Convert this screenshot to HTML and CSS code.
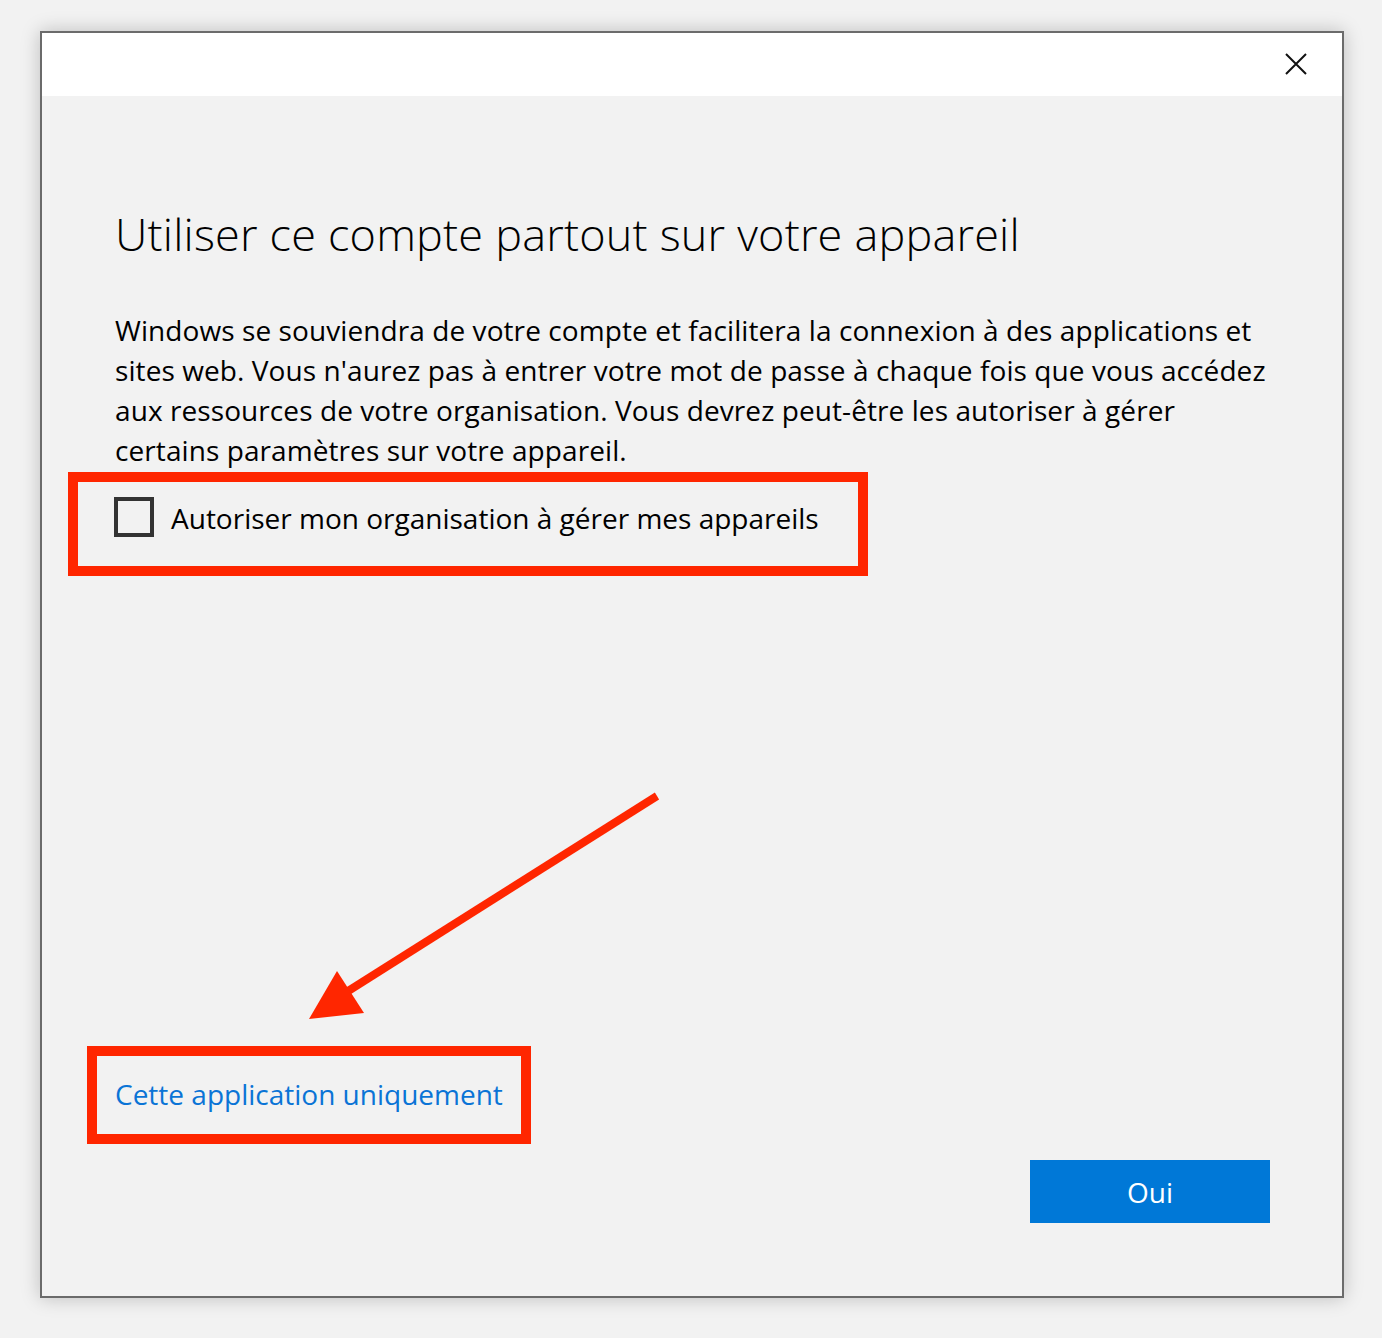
FILE: index.html
```html
<!DOCTYPE html>
<html lang="fr">
<head>
<meta charset="utf-8">
<title>Utiliser ce compte partout sur votre appareil</title>
<link rel="stylesheet" href="styles.css">
</head>
<body>
<div class="window">
  <div class="titlebar">
    <button class="close" aria-label="Fermer">
      <svg width="22" height="22" viewBox="0 0 22 22"><path d="M1 1 L21 21 M21 1 L1 21" stroke="#111" stroke-width="2" fill="none"/></svg>
    </button>
  </div>
  <div class="content">
    <h1 class="title">Utiliser ce compte partout sur votre appareil</h1>
    <p class="text">Windows se souviendra de votre compte et facilitera la connexion à des applications et<br>sites web. Vous n'aurez pas à entrer votre mot de passe à chaque fois que vous accédez<br>aux ressources de votre organisation. Vous devrez peut-être les autoriser à gérer<br>certains paramètres sur votre appareil.</p>
    <label class="check-row">
      <span class="checkbox"></span>
      <span class="check-label">Autoriser mon organisation à gérer mes appareils</span>
    </label>
    <div class="spacer"></div>
    <div class="footer">
      <div class="link-box"><a class="link" href="#">Cette application uniquement</a></div>
      <div class="actions"><button class="primary">Oui</button></div>
    </div>
  </div>
</div>
<svg class="arrow" width="1382" height="1338" viewBox="0 0 1382 1338">
  <line x1="657" y1="796" x2="345" y2="993" stroke="#ff2600" stroke-width="8"/>
  <polygon points="309,1019 337,971 364,1013" fill="#ff2600"/>
</svg>
</body>
</html>
```
FILE: styles.css
```css
html, body {
  margin: 0;
  padding: 0;
}
body {
  background: #f2f2f2;
  width: 1382px;
  height: 1338px;
  position: relative;
  overflow: hidden;
  font-family: "Open Sans", "Noto Sans", sans-serif;
  color: #000;
}
.window {
  position: absolute;
  left: 40px;
  top: 31px;
  width: 1304px;
  height: 1267px;
  box-sizing: border-box;
  border: 2px solid #6b6b6b;
  background: #f2f2f2;
  box-shadow: 0 0 18px rgba(0, 0, 0, 0.22);
  display: flex;
  flex-direction: column;
}
.titlebar {
  height: 63px;
  background: #fff;
  display: flex;
  justify-content: flex-end;
  align-items: center;
  padding-right: 35px;
}
.close {
  border: 0;
  background: transparent;
  padding: 0;
  width: 22px;
  height: 22px;
  display: flex;
  margin-top: -2px;
}
.content {
  flex: 1;
  display: flex;
  flex-direction: column;
  padding: 0 72px 73px 73px;
}
.title {
  margin: 108px 0 0 0;
  font-weight: 300;
  font-size: 45px;
  line-height: 60px;
  letter-spacing: 0.2px;
}
.text {
  margin: 46px 0 0 0;
  font-size: 28px;
  line-height: 40px;
  letter-spacing: 0.08px;
}
.check-row {
  display: flex;
  align-items: center;
  width: 800px;
  height: 104px;
  box-sizing: border-box;
  border: 10px solid #ff2600;
  margin: 2px 0 0 -47px;
  padding: 0 0 13px 36px;
}
.checkbox {
  width: 40px;
  height: 40px;
  box-sizing: border-box;
  border: 4px solid #333;
  margin-right: 17px;
  margin-top: -2px;
}
.check-label {
  font-size: 28px;
  letter-spacing: 0px;
}
.spacer {
  flex: 1;
}
.footer {
  display: flex;
  flex-direction: column;
}
.link-box {
  width: 444px;
  height: 98px;
  box-sizing: border-box;
  border: 10px solid #ff2600;
  margin-left: -28px;
  padding-left: 18px;
  display: flex;
  align-items: center;
}
.link {
  color: #0a74d6;
  text-decoration: none;
  font-size: 28px;
  letter-spacing: 0px;
  margin-top: -3px;
}
.actions {
  display: flex;
  justify-content: flex-end;
  margin-top: 16px;
}
.primary {
  width: 240px;
  height: 63px;
  border: 0;
  background: #0078d7;
  color: #fff;
  font-family: "Open Sans", "Noto Sans", sans-serif;
  font-size: 28px;
  padding: 0;
}
.arrow {
  position: absolute;
  left: 0;
  top: 0;
  pointer-events: none;
}
```
